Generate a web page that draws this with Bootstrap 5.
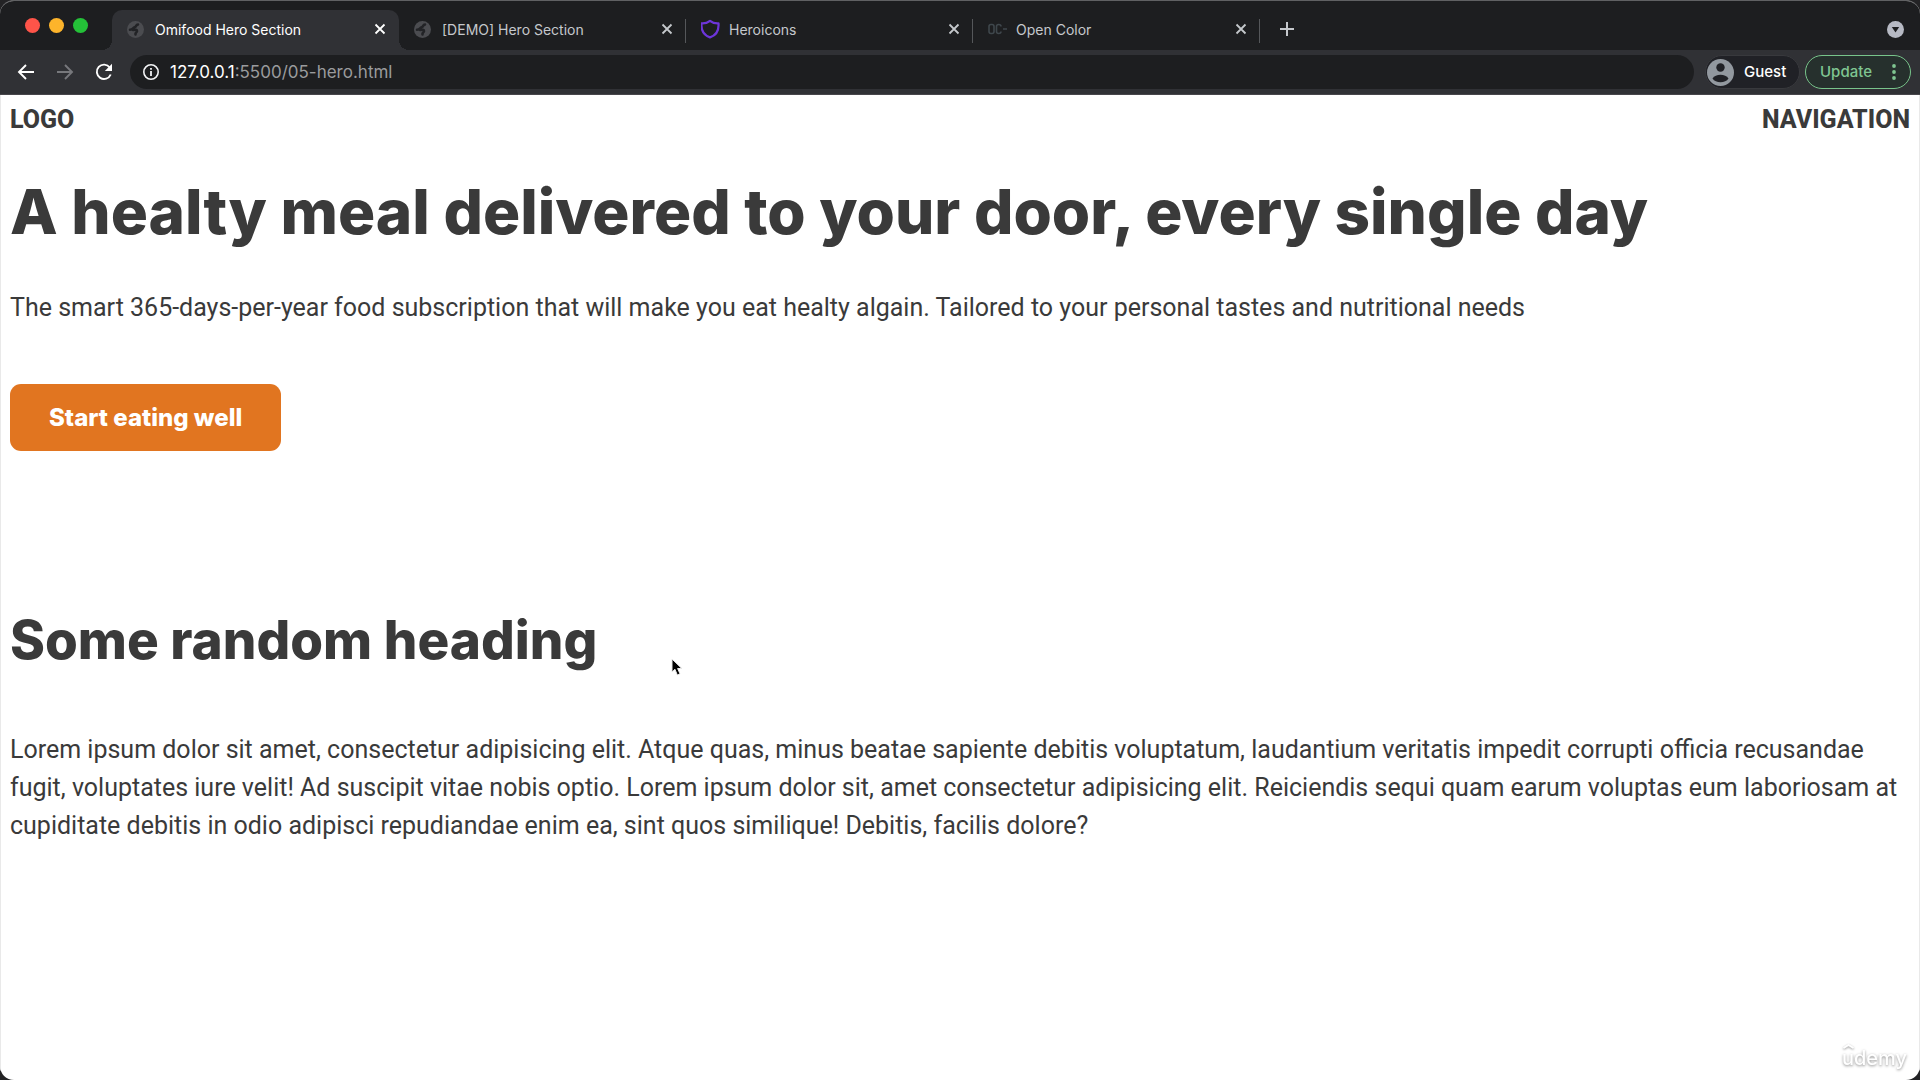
<!DOCTYPE html>
<html lang="en">
<head>
<meta charset="utf-8">
<meta name="viewport" content="width=device-width, initial-scale=1">
<title>Omifood Hero Section</title>
<link href="https://cdn.jsdelivr.net/npm/bootstrap@5.3.0/dist/css/bootstrap.min.css" rel="stylesheet">
<style>
  body { background: #232325; font-family: Inter, "Liberation Sans", sans-serif; }
  svg { display: block; flex-shrink: 0; }
  .browser { min-height: 100vh; border-radius: 14px; background: #fff; border-top: 1px solid #606163; }
  .tabstrip { height: 49px; background: #1d1e20; padding-top: 9px; }
  .lights { width: 112px; padding: 8px 0 0 25px; gap: 9px; }
  .light { width: 15px; height: 15px; border-radius: 50%; }
  .light-red { background: #fe5449; }
  .light-yellow { background: #fdb42b; }
  .light-green { background: #24c138; }
  .tab { width: 287px; height: 40px; padding: 0 9px 2px 15px; color: #c5c8cc; font-size: 14px; position: relative; }
  .tab-title { color: inherit; text-decoration: none; }
  .tab-active { background: #303135; color: #fff; border-radius: 10px 10px 0 0; }
  .tab-active::before, .tab-active::after { content: ""; position: absolute; bottom: 0; width: 10px; height: 10px; }
  .tab-active::before { left: -10px; background: radial-gradient(circle at 0 0, #1d1e20 10px, #303135 10px); }
  .tab-active::after { right: -10px; background: radial-gradient(circle at 100% 0, #1d1e20 10px, #303135 10px); }
  .tab-line::after { content: ""; position: absolute; right: 0; top: 9px; width: 1px; height: 24px; background: #55575a; }
  .plain { background: none; border: 0; padding: 0; color: inherit; }
  .fav { width: 20px; margin-right: 8px; }
  .toolbar { height: 45px; background: #303135; padding: 0 9px 0 16px; color: #f2f3f5; border-bottom: 1px solid #47464b; }
  .nav-tools { gap: 19px; width: 114px; }
  .address { height: 34px; border-radius: 17px; background: #1d1e20; padding: 0 13px; gap: 11px; margin-right: 11px; }
  .url { font-size: 17px; line-height: 24px; color: #fff; }
  .url span { color: #9a9b9d; }
  .guest { height: 34px; width: 95px; border-radius: 17px; background: #202126; border: 1px solid #38393d; padding: 0 1px; gap: 10px; font-size: 15px; font-weight: 500; color: #fff; margin-right: 5px; }
  .update { height: 34px; width: 106px; border-radius: 17px; background: #26302d; border: 1px solid #78c48b; padding: 0 12px 0 14px; font-size: 15px; font-weight: 500; color: #7fc591; }
  .page { color: #3a3a3a; padding: 6px 9px 0; border: solid #e9e9e9; border-width: 0 1px; font-family: Roboto, "Liberation Sans", sans-serif; font-size: 25px; line-height: 38px; }
  .page p { margin: 0; }
  .site-head { font-weight: 800; margin-bottom: 40px; }
  .hero-title, .sub-title { font-family: Inter, "Liberation Sans", sans-serif; font-weight: 800; margin: 0; }
  .hero-title { font-size: 62px; line-height: 66px; margin-bottom: 44px; }
  .sub-title { font-size: 53px; line-height: 60px; margin: 159px 0 61px; }
  .cta { margin-top: 57px; padding: 14px 39px; background: #e17520; color: #fff; font: 800 24px/39px Inter, "Liberation Sans", sans-serif; border: 0; border-radius: 11px; }
  .cta:hover { background: #cf6a1b; color: #fff; }
  .pointer { position: fixed; left: 669px; top: 656px; }
  .watermark { position: fixed; right: 13px; bottom: 9px; color: #fff; font: 500 20px/26px Inter, "Liberation Sans", sans-serif; text-shadow: 0 1px 3px #888; }
  .watermark svg { position: absolute; left: 0; top: -2px; filter: drop-shadow(0 1px 1px #999); }
</style>
</head>
<body>
<svg width="0" height="0" class="position-absolute" aria-hidden="true">
  <symbol id="globe" viewBox="0 0 17 17"><circle cx="8.500" cy="8.500" r="8.500" fill="#4b4c50"/><path d="M11 3.500C8.500 3.500 10 6 7.500 6.300 6 6.500 6 8.800 3 8.800M6 9c2.500-.5 4-.5 4 1s-2 1.500-1.500 3.500" fill="none" stroke="#222326" stroke-width="2.600" stroke-linecap="round" stroke-linejoin="round"/></symbol>
  <symbol id="cross" viewBox="0 0 12 12"><path d="M1.500 1.500l9 9M10.500 1.500l-9 9" stroke="currentColor" stroke-width="1.800"/></symbol>
</svg>
<div class="browser d-flex flex-column overflow-hidden">
  <div class="tabstrip d-flex">
    <div class="lights d-flex flex-shrink-0"><span class="light light-red"></span><span class="light light-yellow"></span><span class="light light-green"></span></div>
    <div class="tab tab-active d-flex align-items-center">
      <span class="fav"><svg width="17" height="17"><use href="#globe"/></svg></span>
      <a class="tab-title flex-grow-1" href="#">Omifood Hero Section</a>
      <button class="plain p-1" type="button" aria-label="Close tab"><svg width="12" height="12"><use href="#cross"/></svg></button>
    </div>
    <div class="tab tab-line d-flex align-items-center">
      <span class="fav"><svg width="17" height="17"><use href="#globe"/></svg></span>
      <a class="tab-title flex-grow-1" href="#">[DEMO] Hero Section</a>
      <button class="plain p-1" type="button" aria-label="Close tab"><svg width="12" height="12"><use href="#cross"/></svg></button>
    </div>
    <div class="tab tab-line d-flex align-items-center">
      <span class="fav"><svg width="20" height="20" viewBox="1 0 20 20"><path d="M10 1.800C7.700 3.700 4.800 4.600 1.500 4.400 1 10.800 3.600 16.200 10 18.400c6.400-2.200 9-7.600 8.500-14C15.200 4.600 12.300 3.700 10 1.800z" fill="none" stroke="#6d35d9" stroke-width="2.200" stroke-linejoin="round" style="overflow:visible"/></svg></span>
      <a class="tab-title flex-grow-1" href="#">Heroicons</a>
      <button class="plain p-1" type="button" aria-label="Close tab"><svg width="12" height="12"><use href="#cross"/></svg></button>
    </div>
    <div class="tab tab-line d-flex align-items-center">
      <span class="fav"><svg width="20" height="20" viewBox="1 0 20 20" fill="none" stroke="#3f474c" stroke-width="1.600"><rect x="2" y="5.500" width="5" height="9" rx="2"/><path d="M14 7.500c0-1.300-1-2-2.300-2S9.500 6.200 9.500 7.500v5c0 1.300 1 2 2.200 2s2.300-.7 2.300-2M16 10h4"/></svg></span>
      <a class="tab-title flex-grow-1" href="#">Open Color</a>
      <button class="plain p-1" type="button" aria-label="Close tab"><svg width="12" height="12"><use href="#cross"/></svg></button>
    </div>
    <div class="tab d-flex align-items-center justify-content-between flex-grow-1 pe-0">
      <button class="plain ms-1" type="button" aria-label="New tab"><svg width="16" height="16" viewBox="0 0 16 16"><path d="M8 1v14M1 8h14" stroke="currentColor" stroke-width="2"/></svg></button>
      <button class="plain me-3" type="button" aria-label="Search tabs"><svg width="17" height="17" viewBox="0 0 17 17"><circle cx="8.500" cy="8.500" r="8.500" fill="#b7bac4"/><path d="M4.800 6h7.400l-3.700 5.500z" fill="#1d1e20"/></svg></button>
    </div>
  </div>
  <div class="toolbar d-flex align-items-center">
    <div class="nav-tools d-flex flex-shrink-0">
      <button class="plain" type="button" aria-label="Back"><svg width="20" height="20" viewBox="0 0 20 20" fill="none" stroke="#fff" stroke-width="1.900"><path d="M18 10H3.500M10 3l-7 7 7 7"/></svg></button>
      <button class="plain" type="button" aria-label="Forward"><svg width="20" height="20" viewBox="0 0 20 20" fill="none" stroke="#77787c" stroke-width="1.900"><path d="M2 10h14.500M10 3l7 7-7 7"/></svg></button>
      <button class="plain" type="button" aria-label="Reload"><svg width="20" height="20" viewBox="0 0 20 20"><path d="M15.800 5.500A7.200 7.200 0 1 0 16.700 12.500" fill="none" stroke="#fff" stroke-width="1.900"/><path d="M18 1.800V9h-7.200z" fill="#fff"/></svg></button>
    </div>
    <div class="address d-flex align-items-center flex-grow-1">
      <svg width="16" height="16" viewBox="0 0 16 16"><circle cx="8" cy="8" r="7.200" fill="none" stroke="#f2f3f5" stroke-width="1.600"/><path d="M8 7v5M8 4v1.800" stroke="#f2f3f5" stroke-width="1.800"/></svg>
      <div class="url">127.0.0.1<span>:5500/05-hero.html</span></div>
    </div>
    <button class="guest d-flex align-items-center flex-shrink-0" type="button"><svg width="27" height="27" viewBox="0 0 27 27"><circle cx="13.500" cy="13.500" r="13.500" fill="#92989f"/><circle cx="13.500" cy="8.500" r="4.200" fill="#202126"/><path d="M5.500 19.500c3-5 13-5 16 0-3 5-13 5-16 0z" fill="#202126"/></svg>Guest</button>
    <button class="update d-flex align-items-center justify-content-between flex-shrink-0" type="button">Update<svg width="8" height="18" viewBox="0 0 8 18" fill="#7fc591"><circle cx="4" cy="3" r="1.900"/><circle cx="4" cy="9" r="1.900"/><circle cx="4" cy="15" r="1.900"/></svg></button>
  </div>
  <div class="page flex-grow-1">
    <header class="site-head d-flex justify-content-between"><div>LOGO</div><nav>NAVIGATION</nav></header>
    <main>
      <h1 class="hero-title">A healty meal delivered to your door, every single day</h1>
      <p>The smart 365-days-per-year food subscription that will make you eat healty algain. Tailored to your personal tastes and nutritional needs</p>
      <a class="btn cta" href="#">Start eating well</a>
      <h2 class="sub-title">Some random heading</h2>
      <p>Lorem ipsum dolor sit amet, consectetur adipisicing elit. Atque quas, minus beatae sapiente debitis voluptatum, laudantium veritatis impedit corrupti officia recusandae fugit, voluptates iure velit! Ad suscipit vitae nobis optio. Lorem ipsum dolor sit, amet consectetur adipisicing elit. Reiciendis sequi quam earum voluptas eum laboriosam at cupiditate debitis in odio adipisci repudiandae enim ea, sint quos similique! Debitis, facilis dolore?</p>
    </main>
  </div>
</div>
<svg class="pointer" width="18" height="24" viewBox="0 0 18 24"><path d="M3 3v13l3-2.700 2.300 5.700 2.700-1.200-2.400-5.300h4.200z" fill="#000" stroke="#e8e8e8" stroke-width="1"/></svg>
<div class="watermark">udemy<svg width="13" height="6" viewBox="0 0 13 6"><path d="M1.500 5l5-3 5 3" fill="none" stroke="#fff" stroke-width="2"/></svg></div>
<script src="https://cdn.jsdelivr.net/npm/bootstrap@5.3.0/dist/js/bootstrap.bundle.min.js"></script>
</body>
</html>
